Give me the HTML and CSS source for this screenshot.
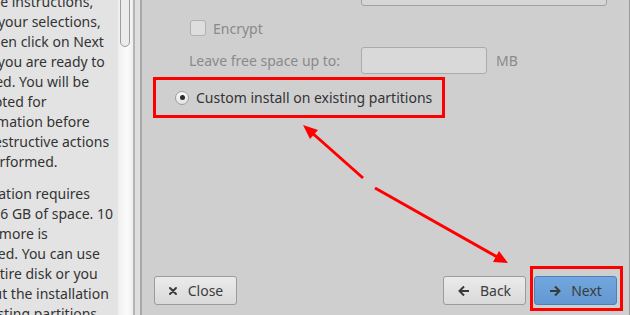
FILE: index.html
```html
<!DOCTYPE html>
<html lang="en">
<head>
    <link rel="stylesheet" href="styles.css">
    <meta charset="UTF-8">
    <meta name="viewport" content="width=device-width, initial-scale=1.0">
    <title>Installation Destination</title>
</head>
<body>
    <div class="window">
        <aside class="sidebar">
            <div class="help">
                <p>Use the instructions,<br>make your selections,<br>and then click on Next<br>when you are ready to<br>proceed. You will be<br>prompted for<br>confirmation before<br>any destructive actions<br>are performed.</p>
                <p>Installation requires<br>about 6 GB of space. 10<br>GB or more is<br>required. You can use<br>the entire disk or you<br>can put the installation<br>on existing partitions.</p>
            </div>
            <div class="scrollbar">
                <div class="thumb"></div>
            </div>
        </aside>
        <div class="divider"></div>

        <main class="page">
            <div class="content">
                <div class="row combo-row">
                    <span class="label"></span>
                    <div class="combo"></div>
                </div>
                <div class="row encrypt-row">
                    <span class="checkbox"></span>
                    <span class="muted">Encrypt</span>
                </div>
                <div class="row space-row">
                    <span class="label muted">Leave free space up to:</span>
                    <span class="field"></span>
                    <span class="muted unit">MB</span>
                </div>
                <div class="choice highlight">
                    <span class="radio"></span>
                    <span>Custom install on existing partitions</span>
                </div>
            </div>

            <div class="footer">
                <button class="btn">
                    <svg width="10" height="10" viewBox="0 0 10 10"><path d="M2 2 L8 8 M8 2 L2 8" stroke="#3a3a3a" stroke-width="2" stroke-linecap="round"/></svg>
                    Close
                </button>
                <div class="nav">
                    <button class="btn">
                        <svg width="12" height="12" viewBox="0 0 12 12"><path d="M11 6 H2 M6 1.5 L1.5 6 L6 10.5" fill="none" stroke="#3a3a3a" stroke-width="2"/></svg>
                        Back
                    </button>
                    <div class="highlight next-box">
                        <button class="btn primary">
                            <svg width="12" height="12" viewBox="0 0 12 12"><path d="M1 6 H10 M6 1.5 L10.5 6 L6 10.5" fill="none" stroke="#3a3a3a" stroke-width="2"/></svg>
                            Next
                        </button>
                    </div>
                </div>
            </div>
        </main>
    </div>

    <svg class="arrows" width="630" height="315" viewBox="0 0 630 315">
        <line x1="363" y1="178" x2="310" y2="131" stroke="#ff0000" stroke-width="3"/>
        <polygon points="303,125 318,130 310,139" fill="#ff0000"/>
        <line x1="375" y1="188" x2="499" y2="258" stroke="#ff0000" stroke-width="3"/>
        <polygon points="508,263 493,262 499,251" fill="#ff0000"/>
    </svg>
</body>
</html>
```

FILE: styles.css
```css
body {
    margin: 0;
    font-family: "Noto Sans", "Open Sans", sans-serif;
    font-size: 14px;
    color: #333;
    background-color: #cfcfcf;
}

.window {
    display: flex;
    width: 630px;
    height: 315px;
    overflow: hidden;
}

.sidebar {
    display: flex;
    width: 133px;
    background-color: #e3e3e3;
    border-right: 2px solid #b4b4b4;
    flex-shrink: 0;
}

.help {
    width: 118px;
    overflow: hidden;
}

.help p {
    margin: 0 0 12px -42px;
    line-height: 20px;
    white-space: nowrap;
}

.help p:first-child {
    margin-top: -8px;
}

.scrollbar {
    width: 15px;
    background: linear-gradient(to right, #efefef, #fbfbfb 60%, #eeeeee);
}

.thumb {
    width: 8px;
    height: 60px;
    margin: -15px 0 0 2px;
    border: 1px solid #9c9c9c;
    border-radius: 5px;
    background-color: #ececec;
}

.divider {
    width: 5px;
    background-color: #dedede;
    border-right: 2px solid #a9a9a9;
    flex-shrink: 0;
}

.page {
    flex: 1;
    display: flex;
    flex-direction: column;
    justify-content: space-between;
    border-right: 1px solid #9a9a9a;
}

.row {
    display: flex;
    align-items: center;
    padding-left: 47px;
}

.label {
    width: 172px;
}

.muted {
    color: #8a8a8a;
}

.combo-row {
    height: 26px;
    margin-top: -20px;
}

.combo {
    width: 244px;
    height: 24px;
    border: 1px solid #a2a2a2;
    border-radius: 3px;
    background-color: #d6d6d6;
}

.encrypt-row {
    height: 16px;
    margin-top: 14px;
    padding-left: 48px;
}

.checkbox {
    width: 14px;
    height: 14px;
    margin-right: 7px;
    border: 1px solid #b2b2b2;
    border-radius: 3px;
    background-color: #dedede;
}

.space-row {
    height: 27px;
    margin-top: 11px;
}

.field {
    width: 124px;
    height: 25px;
    border: 1px solid #ababab;
    border-radius: 3px;
    background-color: #d9d9d9;
}

.unit {
    margin-left: 9px;
}

.highlight {
    border: 3px solid #ff0000;
}

.choice {
    display: flex;
    align-items: center;
    width: 267px;
    height: 35px;
    margin: 3px 0 0 11px;
    padding-left: 19px;
    white-space: nowrap;
}

.radio {
    position: relative;
    flex-shrink: 0;
    width: 12px;
    height: 12px;
    margin-right: 7px;
    border: 1px solid #9e9e9e;
    border-radius: 50%;
    background: linear-gradient(#fafafa, #e2e2e2);
}

.radio::after {
    content: "";
    position: absolute;
    top: 3.5px;
    left: 3.5px;
    width: 5px;
    height: 5px;
    border-radius: 50%;
    background-color: #2a2a2a;
}

.footer {
    display: flex;
    justify-content: space-between;
    align-items: flex-end;
    padding: 0 6px 4px 12px;
}

.nav {
    display: flex;
    align-items: flex-end;
    gap: 4px;
}

.btn {
    display: flex;
    align-items: center;
    justify-content: center;
    gap: 10px;
    width: 83px;
    height: 29px;
    margin-bottom: 6px;
    padding: 0;
    font-family: inherit;
    font-size: 14px;
    color: #3c3c3c;
    border: 1px solid #9b9b9b;
    border-radius: 3px;
    background: linear-gradient(#ebebeb, #d9d9d9);
}

.next-box {
    padding: 7px 3px 3px 1px;
}

.btn.primary {
    margin-bottom: 0;
    border-color: #4f7fb8;
    background: linear-gradient(#72a6de, #6498d2);
}

.arrows {
    position: absolute;
    top: 0;
    left: 0;
    pointer-events: none;
}
```
